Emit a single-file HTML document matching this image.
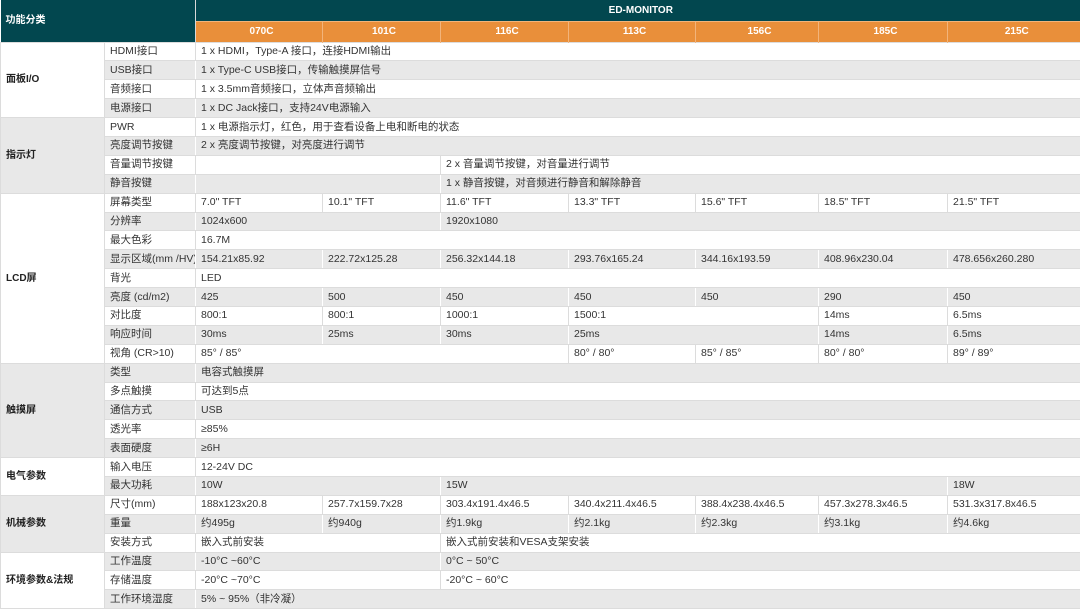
<!DOCTYPE html><html><head><meta charset="utf-8"><style>
*{margin:0;padding:0;box-sizing:border-box}
body{width:1080px;height:606px;overflow:hidden;background:#fff;font-family:"Liberation Sans","Noto Sans CJK SC",sans-serif;font-size:10.5px;color:#333}
table{border-collapse:collapse;table-layout:fixed;width:1080px}
td{height:18.9px;padding:0 0 0 5px;white-space:nowrap;overflow:hidden;border:1px solid #dcdcdc;line-height:17px}
tr.g td{background:#e8e8e8;border-color:#fff #fff #dcdcdc #fff}
table tr td.grp{font-weight:bold;color:#222;background:#fff;border-color:#dcdcdc;font-size:10px}
table tr td.grp.gy{background:#e8e8e8}
td.h1{background:#02474f;color:#fff;font-weight:bold;text-align:center;height:21px;border:none;font-size:10px}
td.h0{background:#02474f;color:#fff;font-weight:bold;border:none;border-right:1px solid #d8d8d8;font-size:10px}
td.h2{background:#e98f3a;color:#fff;font-weight:bold;text-align:center;height:21px;border:none;border-left:1px solid #f2b47b;border-top:1px solid #f2b47b;font-size:10px}
</style></head><body>
<table>
<colgroup><col style="width:104px"><col style="width:91px"><col style="width:127px"><col style="width:118px"><col style="width:128px"><col style="width:127px"><col style="width:123px"><col style="width:129px"><col style="width:133px"></colgroup>
<tr><td class="h0" colspan="2" rowspan="2">功能分类</td><td class="h1" colspan="7">ED-MONITOR</td></tr>
<tr><td class="h2">070C</td><td class="h2">101C</td><td class="h2">116C</td><td class="h2">113C</td><td class="h2">156C</td><td class="h2">185C</td><td class="h2">215C</td></tr>
<tr><td class="grp" rowspan="4">面板I/O</td><td>HDMI接口</td><td colspan="7">1 x HDMI，Type-A 接口，连接HDMI输出</td></tr>
<tr class="g"><td>USB接口</td><td colspan="7">1 x Type-C USB接口，传输触摸屏信号</td></tr>
<tr><td>音频接口</td><td colspan="7">1 x 3.5mm音频接口，立体声音频输出</td></tr>
<tr class="g"><td>电源接口</td><td colspan="7">1 x DC Jack接口，支持24V电源输入</td></tr>
<tr><td class="grp gy" rowspan="4">指示灯</td><td>PWR</td><td colspan="7">1 x 电源指示灯，红色，用于查看设备上电和断电的状态</td></tr>
<tr class="g"><td>亮度调节按键</td><td colspan="7">2 x 亮度调节按键，对亮度进行调节</td></tr>
<tr><td>音量调节按键</td><td colspan="2"></td><td colspan="5">2 x 音量调节按键，对音量进行调节</td></tr>
<tr class="g"><td>静音按键</td><td colspan="2"></td><td colspan="5">1 x 静音按键，对音频进行静音和解除静音</td></tr>
<tr><td class="grp" rowspan="9">LCD屏</td><td>屏幕类型</td><td>7.0" TFT</td><td>10.1" TFT</td><td>11.6" TFT</td><td>13.3" TFT</td><td>15.6" TFT</td><td>18.5" TFT</td><td>21.5" TFT</td></tr>
<tr class="g"><td>分辨率</td><td colspan="2">1024x600</td><td colspan="5">1920x1080</td></tr>
<tr><td>最大色彩</td><td colspan="7">16.7M</td></tr>
<tr class="g"><td>显示区域(mm /HV)</td><td>154.21x85.92</td><td>222.72x125.28</td><td>256.32x144.18</td><td>293.76x165.24</td><td>344.16x193.59</td><td>408.96x230.04</td><td>478.656x260.280</td></tr>
<tr><td>背光</td><td colspan="7">LED</td></tr>
<tr class="g"><td>亮度 (cd/m2)</td><td>425</td><td>500</td><td>450</td><td>450</td><td>450</td><td>290</td><td>450</td></tr>
<tr><td>对比度</td><td>800:1</td><td>800:1</td><td>1000:1</td><td colspan="2">1500:1</td><td>14ms</td><td>6.5ms</td></tr>
<tr class="g"><td>响应时间</td><td>30ms</td><td>25ms</td><td>30ms</td><td colspan="2">25ms</td><td>14ms</td><td>6.5ms</td></tr>
<tr><td>视角 (CR&gt;10)</td><td colspan="3">85° / 85°</td><td>80° / 80°</td><td>85° / 85°</td><td>80° / 80°</td><td>89° / 89°</td></tr>
<tr class="g"><td class="grp gy" rowspan="5">触摸屏</td><td>类型</td><td colspan="7">电容式触摸屏</td></tr>
<tr><td>多点触摸</td><td colspan="7">可达到5点</td></tr>
<tr class="g"><td>通信方式</td><td colspan="7">USB</td></tr>
<tr><td>透光率</td><td colspan="7">≥85%</td></tr>
<tr class="g"><td>表面硬度</td><td colspan="7">≥6H</td></tr>
<tr><td class="grp" rowspan="2">电气参数</td><td>输入电压</td><td colspan="7">12-24V DC</td></tr>
<tr class="g"><td>最大功耗</td><td colspan="2">10W</td><td colspan="4">15W</td><td>18W</td></tr>
<tr><td class="grp gy" rowspan="3">机械参数</td><td>尺寸(mm)</td><td>188x123x20.8</td><td>257.7x159.7x28</td><td>303.4x191.4x46.5</td><td>340.4x211.4x46.5</td><td>388.4x238.4x46.5</td><td>457.3x278.3x46.5</td><td>531.3x317.8x46.5</td></tr>
<tr class="g"><td>重量</td><td>约495g</td><td>约940g</td><td>约1.9kg</td><td>约2.1kg</td><td>约2.3kg</td><td>约3.1kg</td><td>约4.6kg</td></tr>
<tr><td>安装方式</td><td colspan="2">嵌入式前安装</td><td colspan="5">嵌入式前安装和VESA支架安装</td></tr>
<tr class="g"><td class="grp" rowspan="3">环境参数&amp;法规</td><td>工作温度</td><td colspan="2">-10°C ~60°C</td><td colspan="5">0°C ~ 50°C</td></tr>
<tr><td>存储温度</td><td colspan="2">-20°C ~70°C</td><td colspan="5">-20°C ~ 60°C</td></tr>
<tr class="g"><td>工作环境湿度</td><td colspan="7">5% ~ 95%（非冷凝）</td></tr>
</table>
</body></html>
